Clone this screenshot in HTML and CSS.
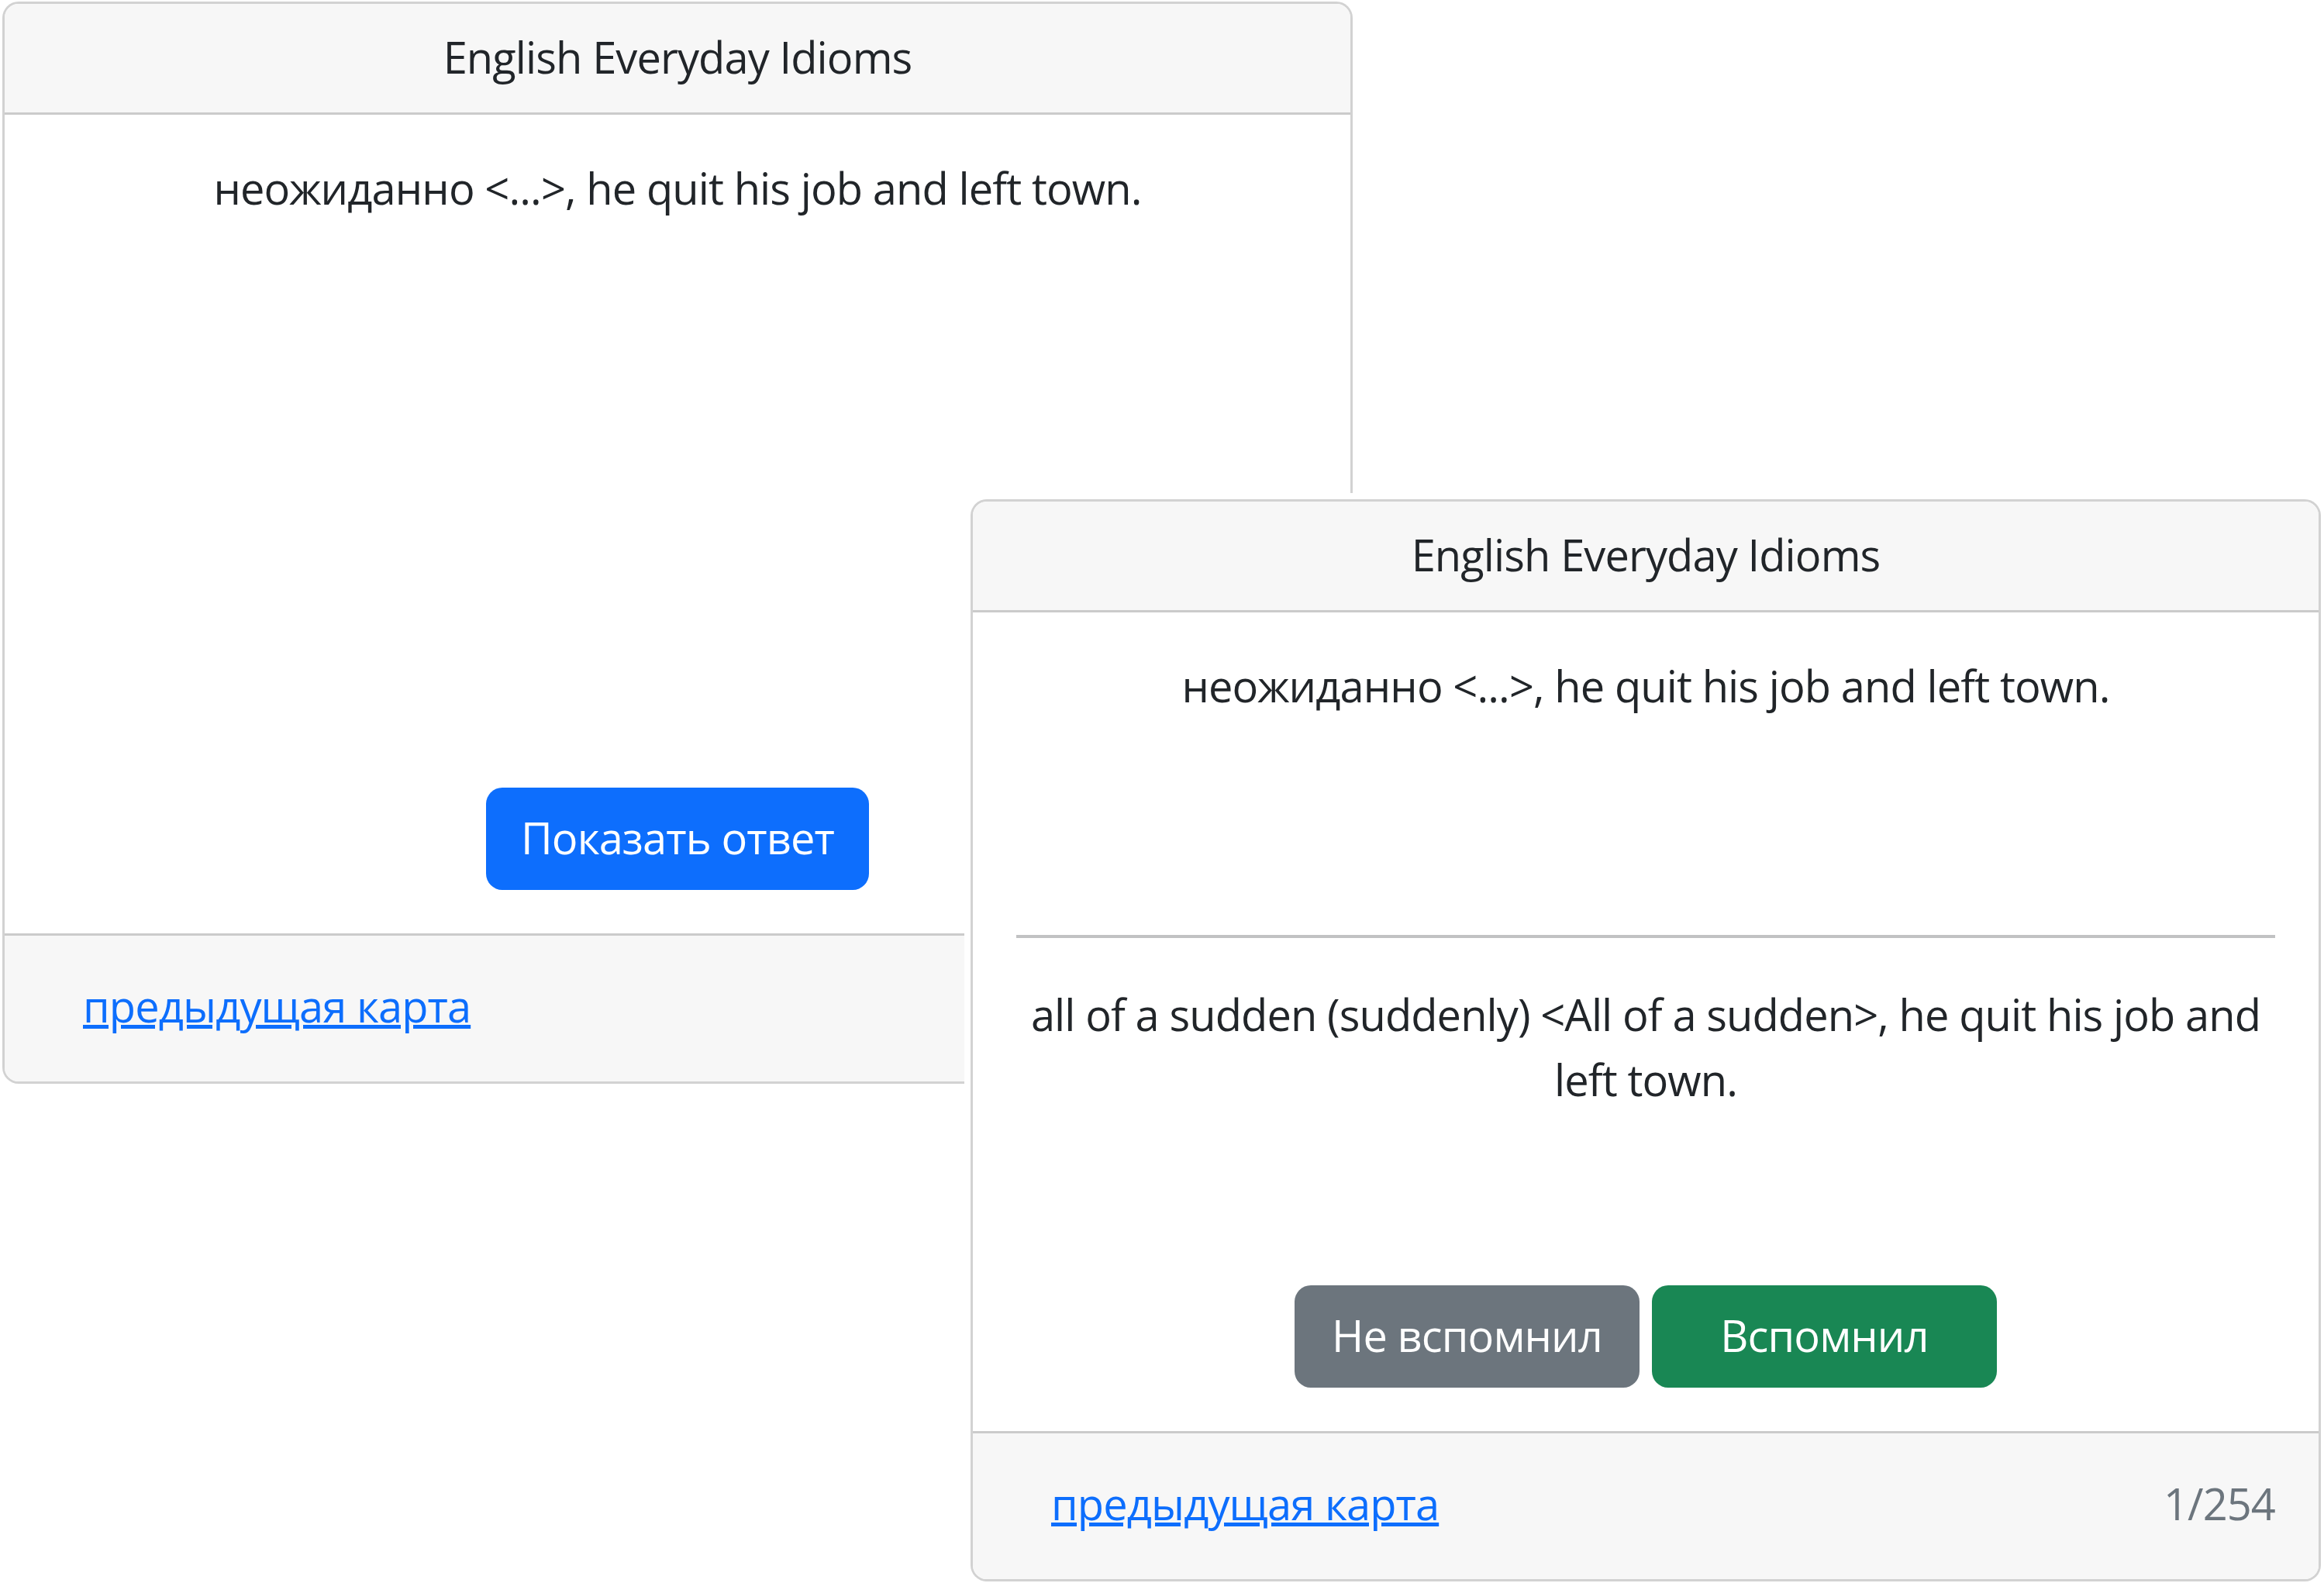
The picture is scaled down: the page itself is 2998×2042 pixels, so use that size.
FILE: index.html
```html
<!DOCTYPE html>
<html lang="ru">
<head>
<meta charset="utf-8">
<title>English Everyday Idioms</title>
<link rel="stylesheet" href="styles.css">
</head>
<body>
<div class="canvas">
  <section class="card card-front">
    <div class="card-header">English Everyday Idioms</div>
    <div class="card-body">
      <div class="question">неожиданно &lt;...&gt;, he quit his job and left town.</div>
      <div class="actions">
        <button class="btn btn-primary" type="button">Показать ответ</button>
      </div>
    </div>
    <div class="card-footer">
      <a class="link" href="#">предыдущая карта</a>
    </div>
  </section>

  <section class="card card-back">
    <div class="card-header">English Everyday Idioms</div>
    <div class="card-body">
      <div class="question">неожиданно &lt;...&gt;, he quit his job and left town.</div>
      <hr class="rule">
      <div class="answer">all of a sudden (suddenly) &lt;All of a sudden&gt;, he quit his job and left town.</div>
      <div class="actions">
        <button class="btn btn-secondary btn-wide" type="button">Не вспомнил</button>
        <button class="btn btn-success btn-wide" type="button">Вспомнил</button>
      </div>
    </div>
    <div class="card-footer">
      <a class="link" href="#">предыдущая карта</a>
      <span class="counter">1/254</span>
    </div>
  </section>
</div>
</body>
</html>
```

FILE: styles.css
```css
* {
  box-sizing: border-box;
}

body {
  margin: 0;
  background: #fff;
  color: #212529;
  font-family: "Open Sans", "Noto Sans", sans-serif;
  font-size: 56px;
  line-height: 84px;
  letter-spacing: -0.9px;
}

.canvas {
  position: relative;
  width: 2998px;
  height: 2042px;
  overflow: hidden;
}

.card {
  position: absolute;
  width: 1742px;
  display: flex;
  flex-direction: column;
  background: #fff;
  border: 3.5px solid rgba(0, 0, 0, 0.175);
  border-radius: 21px;
  overflow: hidden;
}

.card-front {
  left: 3px;
  top: 2px;
}

.card-back {
  left: 1252px;
  top: 644px;
  box-shadow: 0 0 0 8px #fff;
}

.card-header {
  padding: 26px 56px 30px;
  text-align: center;
  background: #f7f7f7;
  border-bottom: 3.5px solid rgba(0, 0, 0, 0.175);
}

.card-body {
  height: 1056px;
  padding: 52px 56px 56px;
  display: flex;
  flex-direction: column;
  text-align: center;
}

.question,
.answer {
  flex: 1 1 auto;
}

.rule {
  margin: 56px 0;
  border: 0;
  border-top: 4px solid #212529;
  opacity: 0.28;
}

.actions {
  display: flex;
  justify-content: center;
  gap: 16px;
}

.btn {
  font: inherit;
  letter-spacing: inherit;
  white-space: nowrap;
  padding: 19px 42px 23px;
  border: 3.5px solid transparent;
  border-radius: 21px;
  color: #fff;
  cursor: pointer;
}

.btn-wide {
  width: 445px;
}

.btn-primary {
  background: #0d6efd;
}

.btn-secondary {
  background: #6c757d;
}

.btn-success {
  background: #198754;
}

.card-footer {
  padding: 28px 56px;
  display: flex;
  justify-content: space-between;
  align-items: center;
  background: #f7f7f7;
  border-top: 3.5px solid rgba(0, 0, 0, 0.175);
}

.link {
  padding: 17px 42px 25px;
  border: 3.5px solid transparent;
  color: #0d6efd;
  text-decoration: underline;
}

.counter {
  color: #6c757d;
  padding-bottom: 8px;
}
```
